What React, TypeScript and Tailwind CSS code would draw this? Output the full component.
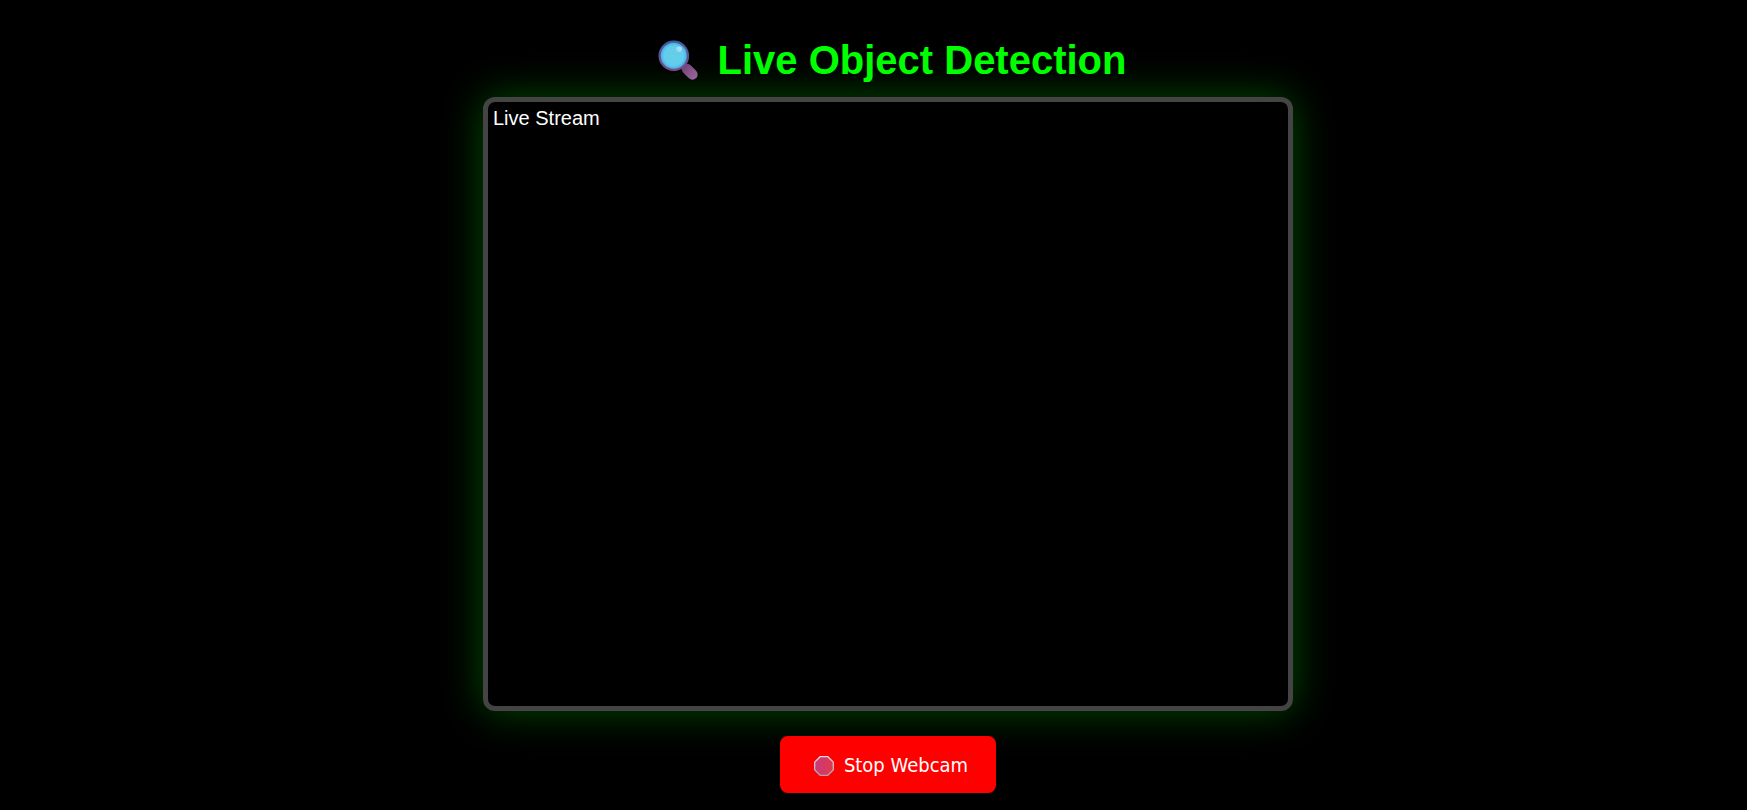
function MagnifierIcon() {
  return (
    <svg viewBox="0 0 40 40" className="h-10 w-10 shrink-0" aria-hidden="true">
      <defs>
        <linearGradient id="rim" x1="0" y1="0" x2="0" y2="1">
          <stop offset="0" stopColor="#3f5f9c" />
          <stop offset="1" stopColor="#7b4c86" />
        </linearGradient>
        <linearGradient id="handle" gradientUnits="userSpaceOnUse" x1="25" y1="25" x2="38" y2="38">
          <stop offset="0" stopColor="#6a3f78" />
          <stop offset="0.5" stopColor="#875489" />
          <stop offset="1" stopColor="#94669a" />
        </linearGradient>
        <radialGradient id="glass">
          <stop offset="0" stopColor="#66cfe9" />
          <stop offset="0.75" stopColor="#62cdeb" />
          <stop offset="1" stopColor="#48aeeb" />
        </radialGradient>
        <linearGradient id="shine" x1="0.8" y1="0" x2="0.2" y2="1">
          <stop offset="0" stopColor="#c4e4fa" />
          <stop offset="1" stopColor="#8fd2f2" />
        </linearGradient>
      </defs>
      <path d="M29 29 L34.4 34.4" stroke="url(#handle)" strokeWidth="10.5" strokeLinecap="round" />
      <circle cx="15.8" cy="15.8" r="15.3" fill="url(#rim)" />
      <circle cx="15.8" cy="15.8" r="13" fill="url(#glass)" />
      <circle cx="21" cy="9.2" r="2.8" fill="url(#shine)" />
    </svg>
  );
}

function StopSignIcon() {
  return (
    <svg viewBox="0 0 20 20" className="h-5 w-5 shrink-0" aria-hidden="true">
      <defs>
        <linearGradient id="sign" x1="0" y1="0" x2="1" y2="0">
          <stop offset="0" stopColor="#c8397c" />
          <stop offset="1" stopColor="#e23a4c" />
        </linearGradient>
        <linearGradient id="edge" x1="0" y1="0" x2="0" y2="1">
          <stop offset="0" stopColor="#e6dfe6" />
          <stop offset="1" stopColor="#aaa0ad" />
        </linearGradient>
      </defs>
      <path
        d="M6.1 0.7 H13.9 L19.3 6.1 V13.9 L13.9 19.3 H6.1 L0.7 13.9 V6.1 Z"
        fill="url(#sign)"
        stroke="url(#edge)"
        strokeWidth="1.3"
        strokeLinejoin="round"
      />
    </svg>
  );
}

export default function App() {
  return (
    <main className="flex min-h-screen flex-col items-center bg-black pt-[37px] pr-5 pb-4 pl-[49px] font-['Liberation_Sans',Arial,sans-serif] text-white">
      <h1 className="z-10 flex items-center gap-5 pl-2 text-[40px] leading-[46px] font-bold text-[#00ff00]">
        <MagnifierIcon />
        <span>Live Object Detection</span>
      </h1>
      <section
        aria-label="Live stream"
        className="mt-[14px] aspect-[810/614] w-full max-w-[810px] rounded-xl border-[5px] border-[#444444] bg-black p-[5px] text-xl leading-[22px] shadow-[0_0_40px_rgba(0,255,0,0.3)]"
      >
        Live Stream
      </section>
      <button
        type="button"
        className="z-10 mt-[25px] flex items-center gap-2.5 rounded-lg bg-[#ff0000] pt-[17px] pr-7 pb-[15px] pl-[34px] font-['DejaVu_Sans_Condensed','DejaVu_Sans',sans-serif] text-xl leading-[25px] text-white"
      >
        <StopSignIcon />
        Stop Webcam
      </button>
    </main>
  );
}
